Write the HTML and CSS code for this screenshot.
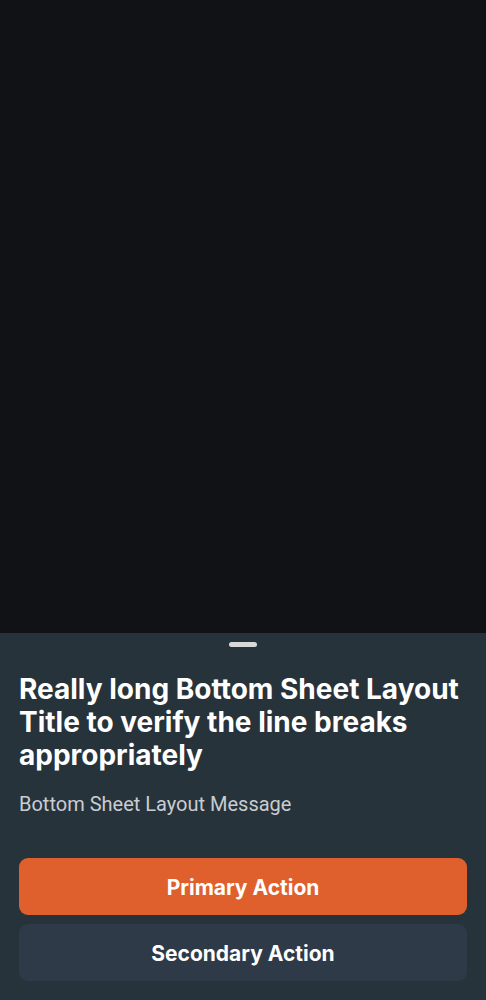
FILE: index.html
```
<!DOCTYPE html>
<html lang="en">
<head>
<meta charset="utf-8">
<meta name="viewport" content="width=device-width, initial-scale=1">
<title>Bottom Sheet</title>
<link rel="stylesheet" href="styles.css">
</head>
<body>
<main class="screen">
  <section class="sheet" role="dialog" aria-labelledby="sheet-title" aria-describedby="sheet-message">
    <div class="handle"></div>
    <h1 class="title" id="sheet-title">Really long Bottom Sheet Layout Title to verify the line breaks appropriately</h1>
    <p class="message" id="sheet-message">Bottom Sheet Layout Message</p>
    <div class="actions">
      <button class="button primary" type="button">Primary Action</button>
      <button class="button secondary" type="button">Secondary Action</button>
    </div>
  </section>
</main>
</body>
</html>
```

FILE: styles.css
```
body {
  margin: 0;
  background: #111216;
  color: #fff;
  font-family: Inter, "Liberation Sans", sans-serif;
}
.screen {
  min-height: 100vh;
  display: flex;
  flex-direction: column;
  justify-content: flex-end;
}
.sheet {
  display: flex;
  flex-direction: column;
  padding: 9px 19px 19px;
  background: #27333b;
}
.handle {
  align-self: center;
  width: 28px;
  height: 5px;
  border-radius: 3px;
  background: #d8d8d8;
}
.title {
  margin: 26px 0 0;
  font-size: 28px;
  line-height: 33px;
  font-weight: 700;
}
.message {
  margin: 18px 0 0;
  color: #c9cdd1;
  font-family: Roboto, "Liberation Sans", sans-serif;
  font-size: 20px;
  font-weight: 400;
  line-height: 28px;
}
.actions {
  display: flex;
  flex-direction: column;
  gap: 9px;
  margin-top: 40px;
}
.button {
  height: 57px;
  padding: 2px 16px 0;
  border: 0;
  border-radius: 9px;
  color: #fff;
  font: inherit;
  font-size: 21px;
  font-weight: 700;
}
.primary { background: #e0602d; }
.secondary { background: #2e3a48; }
```
